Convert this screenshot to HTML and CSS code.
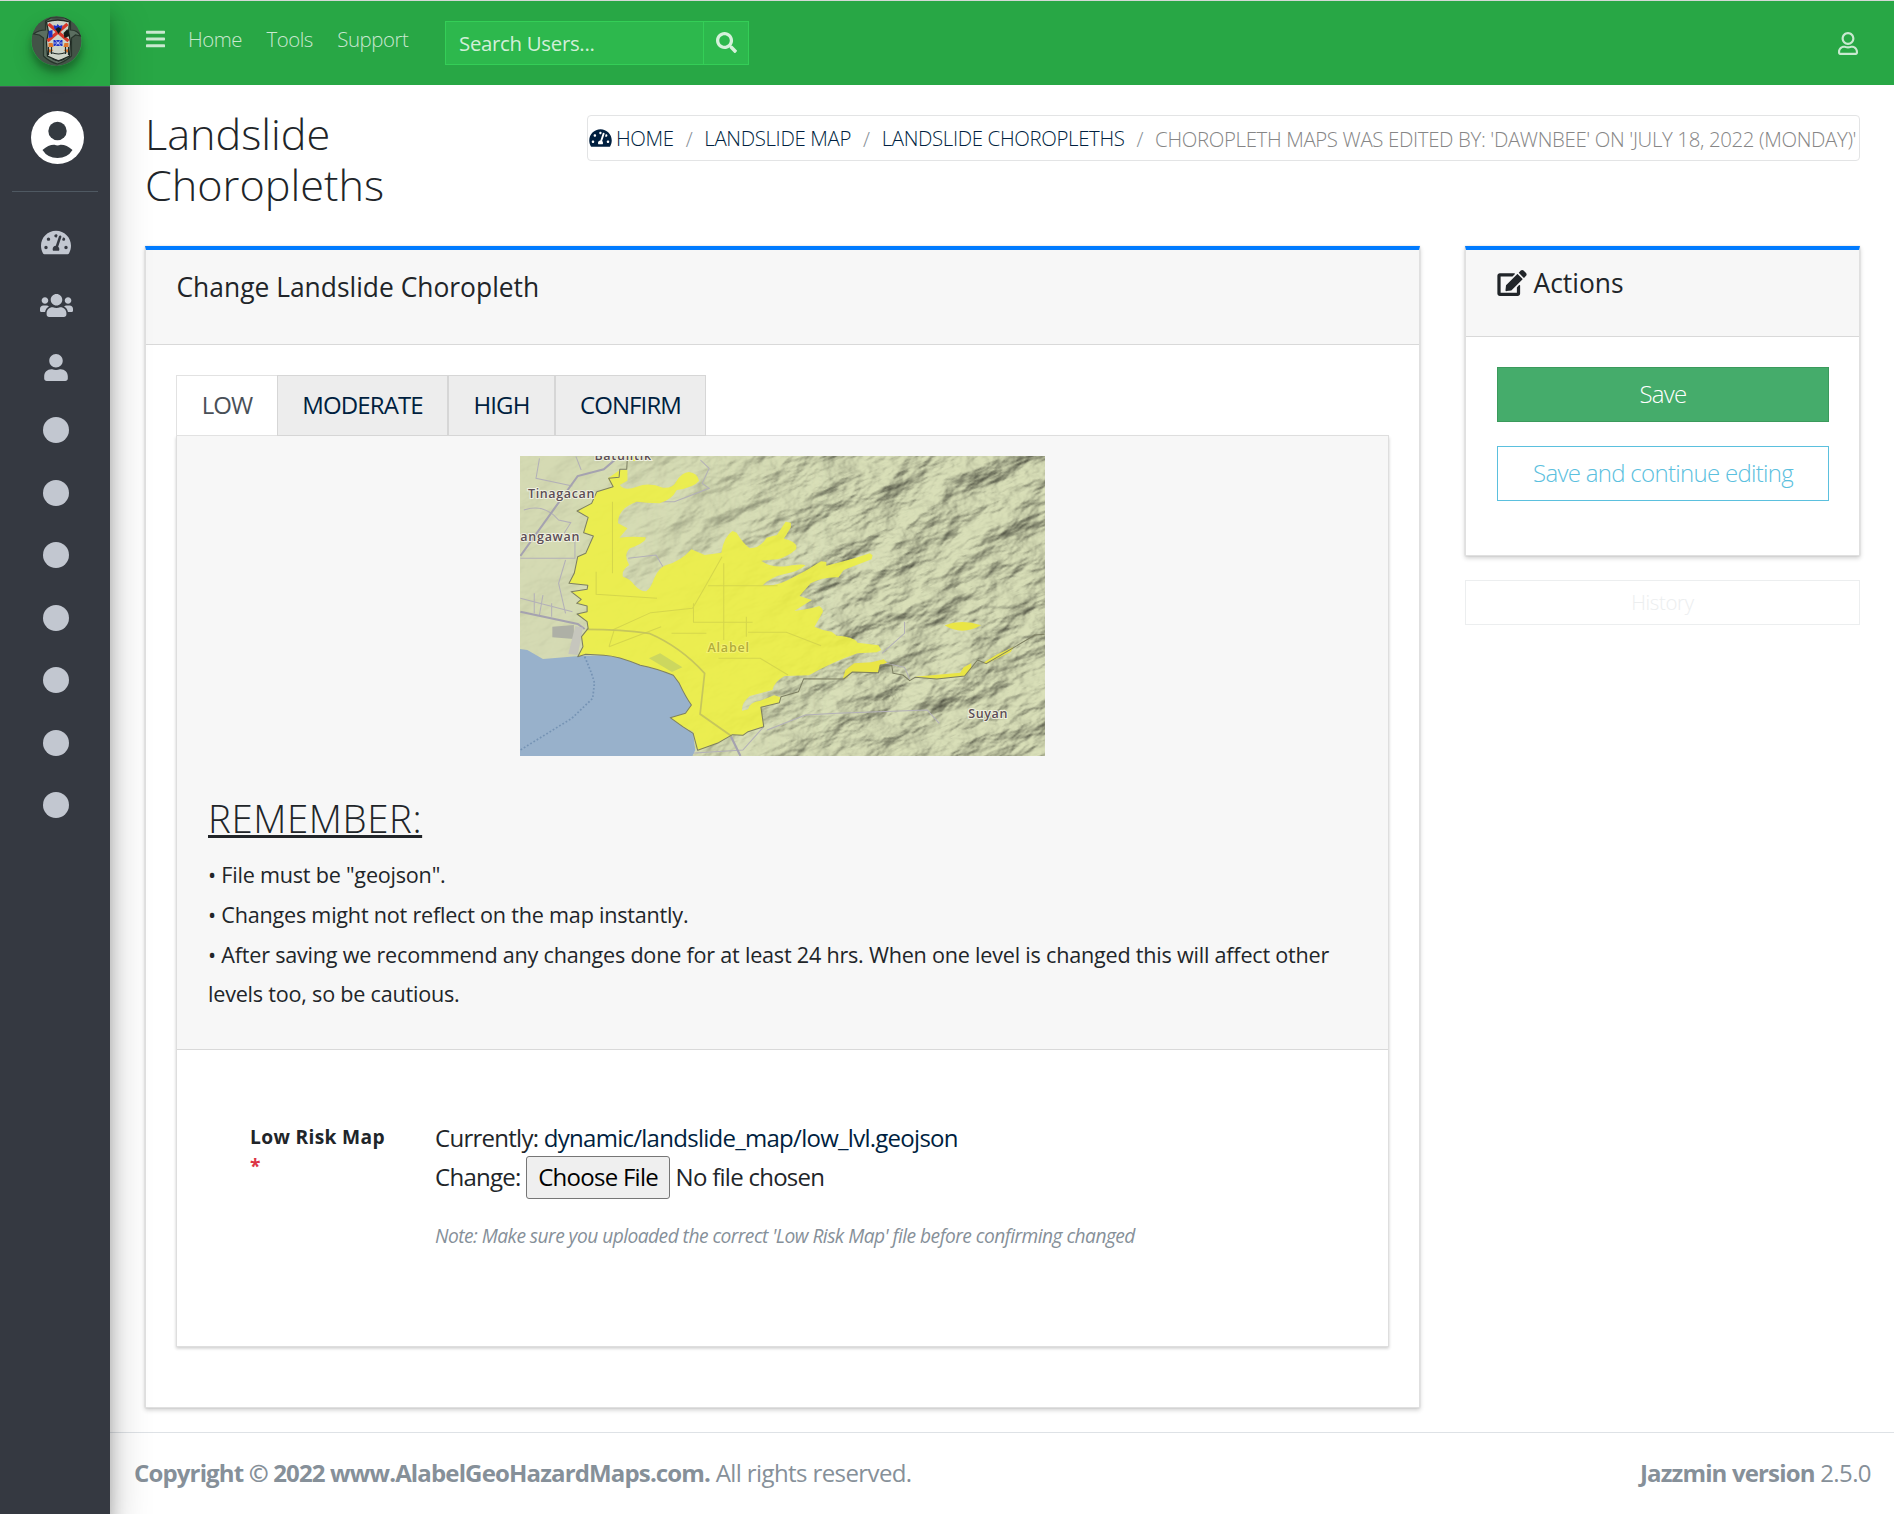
FILE: index.html
```html
<!DOCTYPE html>
<html lang="en">
<head>
<meta charset="utf-8">
<title>Landslide Choropleths</title>
<link rel="stylesheet" href="styles.css">
</head>
<body>
<svg class="sprite" aria-hidden="true">
  <symbol id="i-dash" viewBox="0 0 576 512"><path d="M288 32C128.94 32 0 160.94 0 320c0 52.8 14.25 102.26 39.06 144.8 5.61 9.62 16.3 15.2 27.44 15.2h443c11.14 0 21.83-5.58 27.44-15.2C561.75 422.26 576 372.8 576 320c0-159.06-128.94-288-288-288zm0 64c14.71 0 26.58 10.13 30.32 23.65-1.11 2.26-2.64 4.23-3.45 6.67l-9.22 27.67c-5.13 3.49-10.97 6.01-17.64 6.01-17.67 0-32-14.33-32-32S270.33 96 288 96zM96 384c-17.67 0-32-14.33-32-32s14.33-32 32-32 32 14.33 32 32-14.33 32-32 32zm48-160c-17.67 0-32-14.33-32-32s14.33-32 32-32 32 14.33 32 32-14.33 32-32 32zm246.77-72.41l-61.33 184C343.13 347.33 352 364.54 352 384c0 11.72-3.38 22.55-8.88 32H232.88c-5.5-9.45-8.88-20.28-8.88-32 0-33.94 26.5-61.43 59.9-63.59l61.34-184.01c4.17-12.56 17.73-19.45 30.36-15.17 12.57 4.19 19.35 17.79 15.17 30.36zm14.66 57.2l15.52-46.55c3.47-1.29 7.13-2.23 11.05-2.23 17.67 0 32 14.33 32 32s-14.33 32-32 32c-11.38-.01-20.89-6.28-26.57-15.22zM480 384c-17.67 0-32-14.33-32-32s14.33-32 32-32 32 14.33 32 32-14.33 32-32 32z"/></symbol>
  <symbol id="i-users" viewBox="0 0 640 512"><path d="M96 224c35.3 0 64-28.7 64-64s-28.7-64-64-64-64 28.7-64 64 28.7 64 64 64zm448 0c35.3 0 64-28.7 64-64s-28.7-64-64-64-64 28.7-64 64 28.7 64 64 64zm32 32h-64c-17.6 0-33.5 7.1-45.1 18.6 40.3 22.1 68.9 62 75.1 109.4h66c17.7 0 32-14.3 32-32v-32c0-35.3-28.7-64-64-64zm-256 0c61.9 0 112-50.1 112-112S381.9 32 320 32 208 82.1 208 144s50.1 112 112 112zm76.8 32h-8.3c-20.8 10-43.9 16-68.5 16s-47.6-6-68.5-16h-8.3C179.6 288 128 339.6 128 403.2V432c0 26.5 21.5 48 48 48h288c26.5 0 48-21.5 48-48v-28.8c0-63.6-51.6-115.2-115.2-115.2zm-223.7-13.4C161.5 263.1 145.6 256 128 256H64c-35.3 0-64 28.7-64 64v32c0 17.7 14.3 32 32 32h65.9c6.3-47.4 34.9-87.3 75.2-109.4z"/></symbol>
  <symbol id="i-user" viewBox="0 0 448 512"><path d="M224 256c70.7 0 128-57.3 128-128S294.7 0 224 0 96 57.3 96 128s57.3 128 128 128zm89.6 32h-16.7c-22.2 10.2-46.9 16-72.9 16s-50.6-5.8-72.9-16h-16.7C60.2 288 0 348.2 0 422.4V464c0 26.5 21.5 48 48 48h352c26.5 0 48-21.5 48-48v-41.6c0-74.2-60.2-134.4-134.4-134.4z"/></symbol>
  <symbol id="i-user-o" viewBox="0 0 448 512"><path d="M313.6 304c-28.7 0-42.5 16-89.6 16-47.1 0-60.8-16-89.6-16C60.2 304 0 364.2 0 438.4V464c0 26.5 21.5 48 48 48h352c26.5 0 48-21.5 48-48v-25.6c0-74.2-60.2-134.4-134.4-134.4zM400 464H48v-25.6c0-47.6 38.8-86.4 86.4-86.4 14.6 0 38.3 16 89.6 16 51.7 0 74.9-16 89.6-16 47.6 0 86.4 38.8 86.4 86.4V464zM224 288c79.5 0 144-64.5 144-144S303.5 0 224 0 80 64.5 80 144s64.5 144 144 144zm0-240c52.9 0 96 43.1 96 96s-43.1 96-96 96-96-43.1-96-96 43.1-96 96-96z"/></symbol>
  <symbol id="i-bars" viewBox="0 0 448 512"><path d="M16 132h416c8.8 0 16-7.2 16-16V76c0-8.8-7.2-16-16-16H16C7.2 60 0 67.2 0 76v40c0 8.8 7.2 16 16 16zm0 160h416c8.8 0 16-7.2 16-16v-40c0-8.8-7.2-16-16-16H16c-8.8 0-16 7.2-16 16v40c0 8.8 7.2 16 16 16zm0 160h416c8.8 0 16-7.2 16-16v-40c0-8.8-7.2-16-16-16H16c-8.8 0-16 7.2-16 16v40c0 8.8 7.2 16 16 16z"/></symbol>
  <symbol id="i-search" viewBox="0 0 512 512"><path d="M505 442.7L405.3 343c-4.5-4.5-10.6-7-17-7H372c27.6-35.3 44-79.7 44-128C416 93.1 322.9 0 208 0S0 93.1 0 208s93.1 208 208 208c48.3 0 92.7-16.4 128-44v16.3c0 6.4 2.5 12.5 7 17l99.7 99.7c9.4 9.4 24.6 9.4 33.9 0l28.3-28.3c9.4-9.4 9.4-24.6.1-34zM208 336c-70.7 0-128-57.2-128-128 0-70.7 57.2-128 128-128 70.7 0 128 57.2 128 128 0 70.7-57.2 128-128 128z"/></symbol>
  <symbol id="i-edit" viewBox="0 0 576 512"><path d="M402.6 83.2l90.2 90.2c3.8 3.8 3.8 10 0 13.8L274.4 405.6l-92.8 10.3c-12.4 1.4-22.9-9.1-21.5-21.5l10.3-92.8L388.8 83.2c3.8-3.8 10-3.8 13.8 0zm162-22.9l-48.8-48.8c-15.2-15.2-39.9-15.2-55.2 0l-35.4 35.4c-3.8 3.8-3.8 10 0 13.8l90.2 90.2c3.8 3.8 10 3.8 13.8 0l35.4-35.4c15.2-15.3 15.2-40 0-55.2zM384 346.2V448H64V128h229.8c3.2 0 6.2-1.3 8.5-3.5l40-40c7.6-7.6 2.2-20.5-8.5-20.5H48C21.5 64 0 85.5 0 112v352c0 26.5 21.5 48 48 48h352c26.5 0 48-21.5 48-48V306.2c0-10.7-12.9-16-20.5-8.5l-40 40c-2.2 2.3-3.5 5.3-3.5 8.5z"/></symbol>
</svg>

<aside class="sidebar">
  <a class="brand">
    <svg class="brand-logo" viewBox="0 0 50 50">
      <circle cx="25" cy="25" r="25" fill="#435347"/>
      <path d="M2 18q5-4 12-4V5l5-3h14l6 3v9q7 0 10 6l-5-1-4 3v18q-7 6-14 8-8-2-14-8V22l-4-3z" fill="#5b6e60" stroke="#27352b" stroke-width="1.2"/>
      <path d="M15 6q11-4 23 0l-1 10 2 10-1 14-11 5-11-5-1-14 2-10z" fill="#cdd3c8" stroke="#1e2821" stroke-width="1.3"/>
      <path d="M17 8l20 17M36 8L16 25" stroke="#d8372a" stroke-width="3.2"/>
      <path d="M22 9l3 1 1-2 2 2 3-1-1 4-3 3-4-3zM17 15l4-1v7l-4 1zM22 24h9v6h-9z" fill="#1d34c4"/>
      <path d="M24 24l5 6m0-6l-5 6m-2-3h9" stroke="#dfe3f4" stroke-width=".7"/>
      <path d="M32 17l4-4 2 7-5 2zM24 13l3-2 3 2-3 5z" fill="#161c1a"/>
      <path d="M17 27h4l1 4h-5zM33 27h4v4h-5zM16 33l6 1-5 3zM38 33l-6 1 5 3z" fill="#e0762a"/>
      <path d="M17 31v8m3-8v7m14-7v7m3-7v8M19 36q8 4 16 0M21 43q6 3 12 0" stroke="#222c28" stroke-width="1.2" fill="none"/>
    </svg>
  </a>
  <div class="user-panel">
    <svg class="avatar" viewBox="0 0 53 53"><circle cx="26.5" cy="26.5" r="26.5" fill="#fff"/><circle cx="26.5" cy="20" r="9.2" fill="#343a40"/><path d="M11.5 39q6-5.5 12-5.3 3 1.5 6 0 6-.2 12 5.3-5 8-15 8t-15-8z" fill="#343a40"/></svg>
  </div>
  <nav class="side-nav">
    <a><svg class="ic-dash"><use href="#i-dash"/></svg></a>
    <a><svg class="ic-users"><use href="#i-users"/></svg></a>
    <a><svg class="ic-user"><use href="#i-user"/></svg></a>
    <a><i class="dot"></i></a><a><i class="dot"></i></a><a><i class="dot"></i></a><a><i class="dot"></i></a>
    <a><i class="dot"></i></a><a><i class="dot"></i></a><a><i class="dot"></i></a>
  </nav>
</aside>

<div class="page">
  <header class="navbar">
    <svg class="ic-bars"><use href="#i-bars"/></svg>
    <nav class="links"><a>Home</a><a>Tools</a><a>Support</a></nav>
    <div class="search"><span class="search-text">Search Users...</span><span class="search-btn"><svg><use href="#i-search"/></svg></span></div>
    <svg class="ic-account"><use href="#i-user-o"/></svg>
  </header>

  <section class="content-head">
    <h1>Landslide Choropleths</h1>
    <ol class="breadcrumb">
      <li><a><svg><use href="#i-dash"/></svg>HOME</a></li>
      <li><a>LANDSLIDE MAP</a></li>
      <li><a>LANDSLIDE CHOROPLETHS</a></li>
      <li>CHOROPLETH MAPS WAS EDITED BY: 'DAWNBEE' ON 'JULY 18, 2022 (MONDAY)'</li>
    </ol>
  </section>

  <main class="content">
    <section class="card card-main">
      <div class="card-header"><h2>Change Landslide Choropleth</h2></div>
      <div class="card-body">
        <div class="tabs"><a class="active">LOW</a><a>MODERATE</a><a>HIGH</a><a>CONFIRM</a></div>
        <div class="panel">
          <div class="panel-head">
            <svg class="map" viewBox="29 48 1510 900" preserveAspectRatio="none">
              <defs>
                <filter id="relief" x="0" y="0" width="100%" height="100%" color-interpolation-filters="sRGB">
                  <feTurbulence type="fractalNoise" baseFrequency="0.0055 0.0105" numOctaves="5" seed="11"/>
                  <feColorMatrix values="0 0 0 0 0  0 0 0 0 0  0 0 0 0 0  1 0 0 0 0"/>
                  <feDiffuseLighting surfaceScale="28" diffuseConstant="1.08" lighting-color="#cad0ac"><feDistantLight azimuth="240" elevation="64"/></feDiffuseLighting>
                </filter>
                <linearGradient id="fade" x1="0" y1="0" x2="1" y2="0">
                  <stop offset="0.1" stop-color="#fff" stop-opacity="0.08"/><stop offset="0.35" stop-color="#fff" stop-opacity="0.35"/><stop offset="0.6" stop-color="#fff" stop-opacity="0.8"/>
                </linearGradient>
                <mask id="hills"><rect x="29" y="48" width="1510" height="900" fill="url(#fade)"/></mask>
              </defs>
              <rect x="29" y="48" width="1510" height="900" fill="#d5dbb3"/>
              <g mask="url(#hills)"><rect x="-400" y="-500" width="2400" height="2000" transform="rotate(-24 784 498)" filter="url(#relief)"/></g>
              <g fill="none" stroke="#b3b0b8" stroke-width="3">
                <path d="M85 55L75 115 180 138M190 50l15 40M40 210q60-20 100 30l35 8-30 50M187 290v65H30M160 360l-20 70 20 90M30 475l150 40M70 460v60M95 465l-10 60M120 490v40M548 60l25 25-20 45 20 15-100 40H350M440 380l-20-35-80 10"/>
                <path d="M1070 640l65-60v-35M1080 670l55 12 15 35M740 870l110-45 90-5 260-10 35 40M520 940l150-10 60-70"/>
              </g>
              <path d="M30 348L195 108l75-20 45-40M30 515l165 37 20 15M545 822l90 66 28 60" fill="none" stroke="#a5a2b0" stroke-width="6"/>
              <path d="M122 560l62-5v42l-62-5z" fill="#aeb0a6"/><path d="M188 558l22 5-15 82-27-3z" fill="#c6c6bd"/>
              <path d="M29 627L50 630 95 657 200 648 270 646Q310 648 375 676 420 685 470 706L487 730Q505 770 522 795L505 820 461 833 497 860 527 880 533 930 525 948H29z" fill="#98b1cb"/>
              <path d="M316 90L338 90 338 122 316 135Q330 155 365 140 400 125 440 143 470 145 478 125 495 97 515 96 540 100 544 122 530 142 480 150 465 180 430 190 390 188 365 185 310 205 311 250L338 265 315 293Q350 288 390 292 395 305 345 325 325 345 343 375 320 390 325 410 345 415 358 435 375 455 392 454 405 445 415 415 430 380 450 375 490 365 522 328L560 345 608 338Q615 290 640 273L652 278Q670 310 690 325 720 325 738 293L768 285 793 245 808 248 808 262 788 296Q830 305 823 328 800 350 770 358L723 362Q750 385 800 378 840 370 850 376 830 395 790 402 750 410 725 438 760 440 800 420 850 395 895 364L910 366 910 377Q980 360 1035 340L1043 346 1040 358 960 390 945 412Q900 410 865 430L833 468 868 480 818 513Q870 505 890 498 905 510 898 520L876 560Q900 572 925 575L940 587Q990 590 1000 608L1060 616 1068 630 1055 637 1000 640Q930 665 860 706L790 708Q760 725 755 750L690 768Q665 790 668 812L685 808Q690 785 720 782L760 766 778 772 775 788 722 802 730 860 712 865 685 875 670 886 640 884 600 908 545 931 535 925 527 875 497 860 461 833 505 820 522 795Q505 770 487 730L470 706Q420 685 375 676 310 648 270 646L218 643 195 650 210 620 206 590 225 565 222 545 193 522 222 515 222 498 192 490 205 478 176 455 222 448 224 436 170 430 185 400 195 350 218 340 240 288 212 278 225 232 193 213 235 190 250 155 295 140 282 115ZM330 48H362V63H342Z" fill="#edef48" fill-opacity=".92"/>
              <path d="M958 715L965 690 990 670 1040 667 1075 658 1085 668 1065 675 1060 698 985 696 968 715ZM1165 710L1295 698 1305 682 1327 670V685L1308 708 1228 717ZM1250 556Q1300 536 1355 556 1300 588 1250 556ZM1362 668L1402 643 1450 620 1440 636 1370 671Z" fill="#e9e545"/>
              <g fill="none" stroke="#d5d64c" stroke-width="3">
                <path d="M295 185v215M248 395v68l175 12M615 370v230M610 350q-70 130-85 155l-120 13-110 52M570 437h200M528 490v57h170M465 580h100M685 577h110l100 40M680 530v60M600 655h120l80 50M300 570l-15 50M285 620l150-60"/>
                <path d="M220 568q100 0 180 12 90 40 160 120l-13 122 90 66" stroke="#c6c65c" stroke-width="5"/>
              </g>
              <path d="M400 655l32-15 64 42-30 14z" fill="#ccd75f"/>
              <path d="M338 48L336 88H316L314 112 284 115 297 140 250 155 235 190 193 213 225 232 212 278 240 288 218 340 195 350 185 400 170 430 224 436 222 448 176 455 205 478 192 490 222 498 222 515 193 522 222 545 225 565 206 590 210 620 195 650 218 643 270 646Q310 648 375 676 420 685 470 706L487 730Q505 770 522 795L505 820 461 833 497 860 527 880 540 931 600 908 640 884 670 886 685 875 730 860 722 802 775 788 780 770 830 755 845 716 960 717 985 696 1060 698 1065 675H1098L1102 700 1130 705 1150 722 1165 712 1228 717 1308 708 1345 660 1370 671 1450 622 1510 585 1538 583" fill="none" stroke="#7d7f62" stroke-width="3" stroke-linejoin="round"/>
              <path d="M215 650q25 60 28 80l-5 45-60 60L30 930" fill="none" stroke="#7593b4" stroke-width="5" stroke-dasharray="5 6"/>
              <g font-family="Open Sans" font-weight="600" font-size="36" fill="#5c4d55" stroke="#eef0e0" stroke-width="6" paint-order="stroke">
                <text x="243" y="59" textLength="163">Batulitik</text>
                <text x="52" y="174" textLength="191">Tinagacan</text>
                <text x="30" y="303" textLength="170">angawan</text>
                <text x="1318" y="835" textLength="113">Suyan</text>
                <text x="568" y="636" textLength="120" fill="#b1ac3b" stroke="#f4f272">Alabel</text>
              </g>
            </svg>
            <h3>REMEMBER:</h3>
            <p>• File must be "geojson".</p>
            <p>• Changes might not reflect on the map instantly.</p>
            <p>• After saving we recommend any changes done for at least 24 hrs. When one level is changed this will affect other levels too, so be cautious.</p>
          </div>
          <div class="field">
            <label>Low Risk Map<span class="req">*</span></label>
            <div class="control">
              <div class="line">Currently: <a>dynamic/landslide_map/low_lvl.geojson</a></div>
              <div class="line file">Change: <span class="choose">Choose File</span> No file chosen</div>
              <div class="help">Note: Make sure you uploaded the correct 'Low Risk Map' file before confirming changed</div>
            </div>
          </div>
        </div>
      </div>
    </section>

    <aside class="side">
      <section class="card card-actions">
        <div class="card-header"><h2><svg><use href="#i-edit"/></svg>Actions</h2></div>
        <div class="card-body"><a class="btn save">Save</a><a class="btn cont">Save and continue editing</a></div>
      </section>
      <a class="btn history">History</a>
    </aside>
  </main>

  <footer class="footer"><span><b>Copyright © 2022 www.AlabelGeoHazardMaps.com.</b> All rights reserved.</span><span><b>Jazzmin version</b> 2.5.0</span></footer>
</div>
</body>
</html>
```
FILE: styles.css
```css
* { box-sizing: border-box; }
body { margin: 0; height: 1514px; display: flex; background: #fff; font: 300 24px/1.5 "Open Sans", sans-serif; color: #212529; border-top: 1px solid #d5d8d6; overflow: hidden; }
h1, h2, h3, p, ol { margin: 0; padding: 0; }
svg { display: block; fill: currentColor; flex: none; }
.sprite { position: absolute; width: 0; height: 0; }

.sidebar { width: 110px; flex: none; background: #353941; position: relative; z-index: 2; box-shadow: 0 21px 42px rgba(0,0,0,.25), 0 15px 15px rgba(0,0,0,.22); color: #c2c7d0; }
.brand { display: block; height: 86px; background: #28a745; border-bottom: 1px solid #4b545c; padding: 15px 0 0 31px; }
.brand-logo { width: 51px; height: 50px; border-radius: 50%; box-shadow: 0 10px 20px rgba(0,0,0,.19), 0 6px 6px rgba(0,0,0,.23); }
.user-panel { height: 105px; margin: 0 12px; border-bottom: 1px solid #4f5962; padding: 24px 0 0 19px; }
.avatar { width: 53px; height: 53px; }
.side-nav { padding-top: 19.5px; display: flex; flex-direction: column; }
.side-nav a { height: 62.5px; display: flex; align-items: center; justify-content: center; padding-left: 2px; }
.ic-dash { width: 30px; height: 27px; }
.ic-users { width: 33px; height: 27px; }
.ic-user { width: 24px; height: 27px; }
.dot { width: 26px; height: 26px; border-radius: 50%; background: #c2c7d0; }

.page { flex: 1; min-width: 0; display: flex; flex-direction: column; }
.navbar { height: 84px; background: #28a745; color: rgba(255,255,255,.75); display: flex; align-items: flex-start; padding: 0 36px; }
.ic-bars { width: 19px; height: 22px; margin-top: 27px; }
.links { display: flex; gap: 24.4px; width: 221px; margin: 23px 0 0 23px; font-size: 20.4px; line-height: 31px; letter-spacing: -.45px; }
.search { display: flex; width: 304px; height: 44px; margin: 20px 0 0 36px; background: #2db84d; border: 1px solid #34ce57; font-size: 20.4px; font-weight: 400; line-height: 43px; letter-spacing: -.3px; }
.search-text { flex: 1; padding-left: 13px; color: rgba(255,255,255,.8); }
.search-btn { width: 45px; border-left: 1px solid #34ce57; padding: 10px 0 0 12px; color: rgba(255,255,255,.8); }
.search-btn svg { width: 21px; height: 21px; }
.ic-account { width: 20px; height: 23px; margin: 31px 0 0 auto; }

.content-head { height: 161px; padding: 23px 34px 0 35px; display: flex; justify-content: space-between; align-items: flex-start; }
h1 { width: 300px; font-size: 43.2px; font-weight: 300; line-height: 51px; }
.breadcrumb { display: flex; width: 1273px; height: 46px; margin-top: 7px; border: 1px solid #e3e4e5; border-radius: 4px; font-size: 20.4px; line-height: 46px; letter-spacing: -.35px; list-style: none; white-space: nowrap; color: #868686; padding-left: 1px; }
.breadcrumb a { color: #001f3f; display: flex; align-items: center; }
.breadcrumb svg { width: 23px; height: 20px; margin-right: 4px; }
.breadcrumb li { display: flex; }
.breadcrumb li + li::before { content: "/"; padding: 0 12px; color: #868e96; }

.content { display: flex; align-items: flex-start; padding: 0 34px 0 35px; gap: 45px; }
.card { background: #fff; border: 1px solid #e0e0e0; border-top: 4px solid #007bff; box-shadow: 0 0 1.5px rgba(0,0,0,.125), 0 1.5px 4.5px rgba(0,0,0,.2); }
.card-header { background: #f7f7f7; border-bottom: 1px solid #d9d9d9; padding-left: 30.5px; }
h2 { font-size: 26.4px; font-weight: 400; line-height: 32px; display: flex; }
.card-main { width: 1275px; height: 1162px; }
.card-main > .card-header { height: 95px; padding-top: 21px; }
.card-main > .card-body { padding: 30px 30px 0; }
.tabs { display: flex; height: 61px; margin-bottom: -1px; }
.tabs a { border: 1px solid #d6d6d6; background: #ededed; color: #001f3f; font-weight: 400; line-height: 58px; text-align: center; width: 107px; letter-spacing: -.9px; }
.tabs a:nth-child(2) { width: 171px; }
.tabs a:nth-child(4) { width: 151px; }
.tabs .active { width: 101px; background: #fff; color: #495057; border-color: #e2e2e2; border-right: 0; }
.panel { height: 912px; border: 1px solid #dedede; box-shadow: 0 1.5px 3px rgba(0,0,0,.2); background: #fff; }
.panel-head { height: 614px; background: #f7f7f7; border-bottom: 1px solid #d9d9d9; padding: 20px 31px 0; font-weight: 400; font-size: 21.6px; line-height: 39.8px; letter-spacing: -.22px; }
.map { width: 525px; height: 300px; margin: 0 auto; letter-spacing: 0; }
h3 { font-size: 38.4px; font-weight: 300; line-height: 46px; margin: 39px 0 14px; letter-spacing: .6px; text-decoration: underline; text-decoration-thickness: 3px; }
.field { display: flex; padding: 69px 0 0 73px; font-weight: 400; letter-spacing: -.73px; }
label { width: 185px; font-size: 19.2px; font-weight: 700; line-height: 29px; padding-top: 3px; letter-spacing: .33px; }
.req { display: block; color: #dc3545; }
.line { line-height: 38px; }
.line a { color: #001f3f; }
.file { display: flex; align-items: center; height: 42px; gap: 5.5px; margin-top: -1px; }
.choose { width: 144px; height: 43px; line-height: 40px; text-align: center; background: #efefef; border: 1px solid #767676; border-radius: 3px; color: #000; }
.help { font-size: 19.2px; font-style: italic; line-height: 29px; color: #869099; margin-top: 23px; letter-spacing: -.54px; }

.side { flex: 1; }
.card-actions { height: 310px; }
.card-actions .card-header { height: 87px; padding-top: 17px; padding-left: 31px; }
.card-actions h2 svg { width: 30px; height: 26px; margin: 3px 6.5px 0 0; }
.card-actions .card-body { padding: 30px 30px 0 31px; }
.btn { display: block; height: 55px; text-align: center; border: 1px solid; line-height: 51px; letter-spacing: -.7px; }
.save { background: #45ac6b; border-color: #3b9a5c; color: #fff; margin-bottom: 24px; }
.cont { color: #5bc0de; }
.history { height: 45px; margin-top: 24px; line-height: 43px; font-size: 20.4px; color: #eceeef; letter-spacing: -.35px; }

.footer { margin-top: 24px; height: 82px; border-top: 1px solid #dee2e6; padding: 0 23px 0 24px; display: flex; justify-content: space-between; line-height: 80px; color: #869099; font-weight: 400; letter-spacing: -.6px; }
.footer b { font-weight: 700; letter-spacing: -.85px; }
```
